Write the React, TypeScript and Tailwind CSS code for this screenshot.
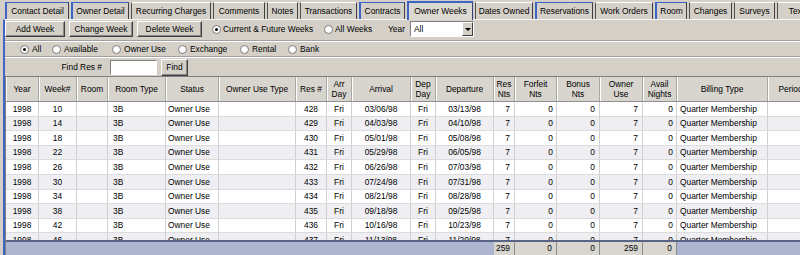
import React from 'react';

type Col = { h: string[]; w: string; a: string };

const cols: Col[] = [
  { h: ['Year'], w: 'w-[33px]', a: 'justify-center' },
  { h: ['Week#'], w: 'w-[38px]', a: 'justify-center' },
  { h: ['Room'], w: 'w-[31px]', a: 'justify-center' },
  { h: ['Room Type'], w: 'w-[58px]', a: 'justify-start pl-[5px]' },
  { h: ['Status'], w: 'w-[53px]', a: 'justify-start pl-[2px]' },
  { h: ['Owner Use Type'], w: 'w-[77px]', a: 'justify-start pl-[2px]' },
  { h: ['Res #'], w: 'w-[31px]', a: 'justify-center' },
  { h: ['Arr', 'Day'], w: 'w-[25px]', a: 'justify-center' },
  { h: ['Arrival'], w: 'w-[59px]', a: 'justify-center' },
  { h: ['Dep', 'Day'], w: 'w-[25px]', a: 'justify-center' },
  { h: ['Departure'], w: 'w-[58px]', a: 'justify-center' },
  { h: ['Res', 'Nts'], w: 'w-[21px]', a: 'justify-end pr-[4px]' },
  { h: ['Forfeit', 'Nts'], w: 'w-[42px]', a: 'justify-end pr-[3px]' },
  { h: ['Bonus', 'Nts'], w: 'w-[43px]', a: 'justify-end pr-[4px]' },
  { h: ['Owner', 'Use'], w: 'w-[43px]', a: 'justify-end pr-[4px]' },
  { h: ['Avail', 'Nights'], w: 'w-[34px]', a: 'justify-end pr-[3px]' },
  { h: ['Billing Type'], w: 'w-[91px]', a: 'justify-start pl-[3px]' },
  { h: ['Period'], w: 'w-[46px]', a: 'justify-start pl-[3px]' },
];

const arrivals = ['03/06/98', '04/03/98', '05/01/98', '05/29/98', '06/26/98', '07/24/98', '08/21/98', '09/18/98', '10/16/98', '11/13/98'];
const departures = ['03/13/98', '04/10/98', '05/08/98', '06/05/98', '07/03/98', '07/31/98', '08/28/98', '09/25/98', '10/23/98', '11/20/98'];

const rows = arrivals.map((arr, i) => [
  '1998', String(10 + i * 4), '', '3B', 'Owner Use', '', String(428 + i), 'Fri', arr, 'Fri', departures[i],
  '7', '0', '0', '7', '0', 'Quarter Membership', '',
]);

const tabs = [
  { t: 'Contact Detail', w: 'w-[64px]', blue: true },
  { t: 'Owner Detail', w: 'w-[58px]', blue: true },
  { t: 'Recurring Charges', w: 'w-[80px]', blue: false },
  { t: 'Comments', w: 'w-[52px]', blue: false },
  { t: 'Notes', w: 'w-[31px]', blue: false },
  { t: 'Transactions', w: 'w-[57px]', blue: false },
  { t: 'Contracts', w: 'w-[46px]', blue: true },
  { t: 'Owner Weeks', w: 'w-[66px]', blue: true, active: true },
  { t: 'Dates Owned', w: 'w-[58px]', blue: false },
  { t: 'Reservations', w: 'w-[58px]', blue: true },
  { t: 'Work Orders', w: 'w-[58px]', blue: false },
  { t: 'Room', w: 'w-[32px]', blue: true },
  { t: 'Changes', w: 'w-[43px]', blue: false },
  { t: 'Surveys', w: 'w-[41px]', blue: false },
  { t: 'Texts', w: 'w-[43px]', blue: false },
];

function Radio({ on }: { on?: boolean }) {
  return (
    <span className="w-[9px] h-[9px] shrink-0 rounded-full bg-white border border-[#7a7a7a] flex items-center justify-center">
      {on && <span className="w-[3px] h-[3px] rounded-full bg-black" />}
    </span>
  );
}

function Btn({ label, w }: { label: string; w: string }) {
  return (
    <div className={`${w} h-full flex items-center justify-center border border-t-white border-l-white border-r-[#404040] border-b-[#404040] shadow-[inset_-1px_-1px_0_#8a8a8a] bg-[#d4d0c8]`}>
      {label}
    </div>
  );
}

export default function App() {
  return (
    <div className="w-[800px] h-[255px] overflow-hidden bg-[#d4d0c8] text-black text-[8.4px] leading-none font-['Liberation_Sans',Arial,sans-serif]">
      {/* Tabs */}
      <div className="h-[19px] flex items-end gap-[2px] pl-[5px]">
        {tabs.map((tb) => (
          <div
            key={tb.t}
            className={`${tb.w} shrink-0 flex items-center justify-center whitespace-nowrap ${
              tb.active
                ? 'h-[19px] bg-[#dcd9d2] border-l-2 border-t-2 border-r border-[#3e64c6] border-r-[#30407a] relative top-[1px]'
                : tb.blue
                ? 'h-[17px] border-l-2 border-t border-r border-[#3e64c6] border-r-[#404040]'
                : 'h-[17px] border-l border-t border-r border-t-white border-l-[#505050] border-r-[#404040]'
            }`}
          >
            {tb.t}
          </div>
        ))}
      </div>

      {/* Panel */}
      <div className="ml-[3px] border-l-2 border-t border-l-[#3e64c6] border-t-[#f4f4f4] flex flex-col">
        {/* toolbar */}
        <div className="mt-[1px] h-[16px] flex items-center">
          <Btn label="Add Week" w="w-[60px]" />
          <div className="ml-[4px] h-full flex"><Btn label="Change Week" w="w-[64px]" /></div>
          <div className="ml-[4px] h-full flex"><Btn label="Delete Week" w="w-[65px]" /></div>
          <div className="ml-[10px] flex items-center gap-[2px]">
            <Radio on />
            <span className="w-[89px] whitespace-nowrap">Current &amp; Future Weeks</span>
          </div>
          <div className="ml-[12px] flex items-center gap-[2px]">
            <Radio />
            <span className="w-[40px] whitespace-nowrap">All Weeks</span>
          </div>
          <span className="ml-[13px] w-[22px]">Year</span>
          <div className="w-[64px] h-[16px] bg-white border border-t-[#808080] border-l-[#808080] border-r-white border-b-white flex items-center">
            <span className="flex-1 pl-[3px]">All</span>
            <div className="w-[11px] h-full bg-[#d4d0c8] border border-t-white border-l-white border-r-[#404040] border-b-[#404040] flex items-center justify-center">
              <span className="w-0 h-0 border-l-[3px] border-r-[3px] border-t-[3px] border-l-transparent border-r-transparent border-t-black" />
            </div>
          </div>
        </div>

        <div className="mt-[3px] h-[2px] border-t border-b border-t-[#a0a0a0] border-b-white" />

        {/* filters */}
        <div className="h-[14px] flex items-center pl-[15px]">
          {[
            ['All', 'w-[32px]', true],
            ['Available', 'w-[60px]', false],
            ['Owner Use', 'w-[66px]', false],
            ['Exchange', 'w-[62px]', false],
            ['Rental', 'w-[48px]', false],
            ['Bank', 'w-[40px]', false],
          ].map(([l, w, on]) => (
            <div key={l as string} className={`${w} flex items-center gap-[3px]`}>
              <Radio on={on as boolean} />
              <span className="whitespace-nowrap">{l}</span>
            </div>
          ))}
        </div>

        <div className="h-[2px] border-t border-b border-t-[#a0a0a0] border-b-white" />

        {/* find */}
        <div className="h-[18px] flex items-center">
          <span className="w-[97px] text-right">Find Res #</span>
          <div className="ml-[8px] w-[47px] h-[15px] bg-white border border-t-[#808080] border-l-[#808080] border-r-white border-b-white" />
          <div className="ml-[4px] h-[17px] flex"><Btn label="Find" w="w-[27px]" /></div>
        </div>

        {/* grid */}
        <div className="border-t border-l border-[#808080] bg-white">
          <div className="h-[25px] flex bg-[#d8d5ce] border-b border-[#909090]">
            {cols.map((c, i) => (
              <div
                key={i}
                className={`${c.w} shrink-0 h-full flex flex-col items-center justify-center gap-[1px] border-r border-[#a8a8a8] shadow-[inset_1px_0_0_#fff] whitespace-nowrap overflow-hidden`}
              >
                {c.h.map((t) => (
                  <span key={t}>{t}</span>
                ))}
              </div>
            ))}
          </div>

          <div className="h-[138px] overflow-hidden">
            {rows.map((r, ri) => (
              <div key={ri} className={`h-[14.6px] flex border-b border-[#dcdcdc] ${ri % 2 ? 'bg-[#efeff3]' : 'bg-white'}`}>
                {cols.map((c, ci) => (
                  <div key={ci} className={`${c.w} shrink-0 h-full flex items-center ${c.a} border-r border-[#d0d0d0] whitespace-nowrap overflow-hidden`}>
                    {r[ci]}
                  </div>
                ))}
              </div>
            ))}
          </div>

          <div className="h-[15px] flex bg-[#aeb6cf] border-t-2 border-[#5a6486]">
            <div className="w-[488px] shrink-0" />
            {[
              ['259', 'w-[21px]'],
              ['0', 'w-[42px]'],
              ['0', 'w-[43px]'],
              ['259', 'w-[43px]'],
              ['0', 'w-[34px]'],
            ].map(([v, w], i) => (
              <div key={i} className={`${w} shrink-0 h-full flex items-center justify-end pr-[4px] bg-[#d9d6cf] border-r border-[#8c8c8c]`}>
                {v}
              </div>
            ))}
          </div>
        </div>
      </div>
    </div>
  );
}
